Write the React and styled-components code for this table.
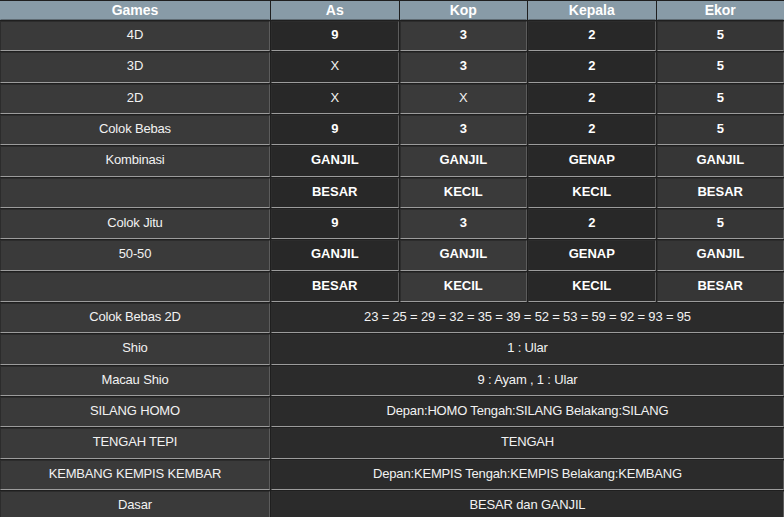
import React from "react";
import styled, { createGlobalStyle } from "styled-components";

const GlobalStyle = createGlobalStyle`
  html, body {
    margin: 0;
    padding: 0;
    background: #1f1f1f;
  }
  body {
    font-family: "Liberation Sans", Arial, sans-serif;
    overflow: hidden;
  }
`;

const Table = styled.table`
  width: calc(100% + 2px);
  margin: 0 -1px;
  border-collapse: separate;
  border-spacing: 1px;
  background: #1f1f1f;
  table-layout: fixed;
  font-size: 13px;
  color: #fff;
`;

const Head = styled.th`
  background: #889ba7;
  color: #fff;
  font-weight: bold;
  font-size: 14px;
  height: 19px;
  box-sizing: border-box;
  padding: 0;
  line-height: 17px;
  border: 1px solid #889ba7;
  border-bottom-color: #5f6b73;
`;

const colBg = ["#3a3a3a", "#282828", "#3a3a3a", "#282828", "#363636"];

const Cell = styled.td`
  background: ${(p) => (p.$wide ? "#2b2b2b" : colBg[p.$col] || "#3a3a3a")};
  text-align: center;
  font-weight: ${(p) => (p.$bold ? "bold" : "normal")};
  letter-spacing: ${(p) => (p.$bold ? "0" : "-0.17px")};
  color: ${(p) => (p.$bold ? "#fff" : "#f2f2f2")};
  height: 30.33px;
  box-sizing: border-box;
  padding: 0 4px 3px;
  border-top: 1px solid #2c2c2c;
  border-left: 1px solid #2c2c2c;
  border-bottom: 1px solid #9c9c9c;
  border-right: 1px solid #5c5c5c;
`;

const heads = ["Games", "As", "Kop", "Kepala", "Ekor"];

const grid = [
  ["4D", "9", "3", "2", "5"],
  ["3D", "X", "3", "2", "5"],
  ["2D", "X", "X", "2", "5"],
  ["Colok Bebas", "9", "3", "2", "5"],
  ["Kombinasi", "GANJIL", "GANJIL", "GENAP", "GANJIL"],
  ["", "BESAR", "KECIL", "KECIL", "BESAR"],
  ["Colok Jitu", "9", "3", "2", "5"],
  ["50-50", "GANJIL", "GANJIL", "GENAP", "GANJIL"],
  ["", "BESAR", "KECIL", "KECIL", "BESAR"],
];

const wide = [
  ["Colok Bebas 2D", "23 = 25 = 29 = 32 = 35 = 39 = 52 = 53 = 59 = 92 = 93 = 95"],
  ["Shio", "1 : Ular"],
  ["Macau Shio", "9 : Ayam , 1 : Ular"],
  ["SILANG HOMO", "Depan:HOMO Tengah:SILANG Belakang:SILANG"],
  ["TENGAH TEPI", "TENGAH"],
  ["KEMBANG KEMPIS KEMBAR", "Depan:KEMPIS Tengah:KEMPIS Belakang:KEMBANG"],
  ["Dasar", "BESAR dan GANJIL"],
];

const isBold = (v) => !/[a-z]/.test(v) && v !== "X";

export default function App() {
  return (
    <>
      <GlobalStyle />
      <Table>
        <colgroup>
          <col style={{ width: 270 }} />
          <col />
          <col />
          <col />
          <col />
        </colgroup>
        <thead>
          <tr>
            {heads.map((h) => (
              <Head key={h}>{h}</Head>
            ))}
          </tr>
        </thead>
        <tbody>
          {grid.map((row, i) => (
            <tr key={i}>
              {row.map((v, j) => (
                <Cell key={j} $col={j} $bold={j > 0 && isBold(v)}>
                  {v}
                </Cell>
              ))}
            </tr>
          ))}
          {wide.map(([label, value]) => (
            <tr key={label}>
              <Cell $col={0}>{label}</Cell>
              <Cell colSpan={4} $wide>
                {value}
              </Cell>
            </tr>
          ))}
        </tbody>
      </Table>
    </>
  );
}
